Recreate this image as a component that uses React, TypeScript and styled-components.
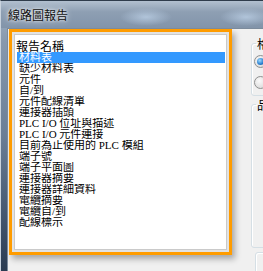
import styled, { createGlobalStyle } from "styled-components";

const GlobalStyle = createGlobalStyle`
  html, body {
    margin: 0;
    padding: 0;
    overflow: hidden;
  }
  body {
    width: 263px;
    height: 271px;
    background: #f0f0f0;
  }
`;

const reportNames: string[] = [
  "材料表",
  "缺少材料表",
  "元件",
  "自/到",
  "元件配線清單",
  "連接器插頭",
  "PLC I/O 位址與描述",
  "PLC I/O 元件連接",
  "目前為止使用的 PLC 模組",
  "端子號",
  "端子平面圖",
  "連接器摘要",
  "連接器詳細資料",
  "電纜摘要",
  "電纜自/到",
  "配線標示",
];

const App: React.FC = () => {
  const selected = 0;

  return (
    <>
      <GlobalStyle />
      <Window>
        <TitleBar>線路圖報告</TitleBar>
        <Body>
          <Client>
            <Highlight>
              <ListBox>
                <ListHeader>報告名稱</ListHeader>
                {reportNames.map((name, i) => (
                  <ListRow key={name} $selected={i === selected}>
                    <RowText>{name}</RowText>
                  </ListRow>
                ))}
              </ListBox>
            </Highlight>

            <SidePanel>
              <GroupBox>
                <Legend>格式</Legend>
                <Radio $checked />
                <Radio />
              </GroupBox>
              <GroupBox $tall>
                <Legend>品項</Legend>
              </GroupBox>
              <LowerBox />
            </SidePanel>
          </Client>
        </Body>
      </Window>
    </>
  );
};

const Window = styled.div`
  width: 263px;
  height: 271px;
  box-sizing: border-box;
  display: flex;
  flex-direction: column;
  overflow: hidden;
  border-top: 1px solid #2f3c4b;
  border-left: 1px solid #c9d3de;
  background: linear-gradient(
    to bottom,
    #a3b3c5 0%,
    #8799ae 15%,
    #6a7e96 50%,
    #43566e 80%,
    #2a3b51 100%
  );
`;

const TitleBar = styled.div`
  height: 27px;
  display: flex;
  align-items: center;
  padding-left: 7px;
  flex-shrink: 0;
  font-family: "Noto Sans CJK TC", sans-serif;
  font-size: 12px;
  color: #111;
  text-shadow: 0 0 6px rgba(255, 255, 255, 0.9), 0 0 3px rgba(255, 255, 255, 0.9);
  background:
    radial-gradient(ellipse 26px 9px at 145px 16px, rgba(190, 210, 232, 0.75), transparent),
    radial-gradient(ellipse 26px 9px at 245px 16px, rgba(190, 210, 232, 0.75), transparent),
    linear-gradient(to bottom, #b2c0cf 0%, #8e9fb3 40%, #8294aa 100%);
`;

const Body = styled.div`
  flex: 1;
  display: flex;
  padding-left: 6px;
  min-height: 0;
`;

const Client = styled.div`
  flex: 1;
  display: flex;
  align-items: flex-start;
  gap: 19px;
  padding-left: 1px;
  background: #f0f0f0;
  border-top: 1px solid #7c8b9c;
  border-left: 1px solid #7c8b9c;
  overflow: hidden;
`;

const Highlight = styled.div`
  width: 223px;
  height: 226px;
  box-sizing: border-box;
  flex-shrink: 0;
  border: 3px solid #ff9c00;
  padding: 2px;
  background: #e3e3e3;
  box-shadow: 3px 4px 6px rgba(0, 0, 0, 0.3);
`;

const ListBox = styled.div`
  height: 100%;
  box-sizing: border-box;
  background: #fff;
  border: 1px solid #cacaca;
  padding: 4px 1px 0 1px;
  font-family: "Liberation Serif", "Noto Sans CJK TC", serif;
  color: #000;
`;

const ListHeader = styled.div`
  height: 13px;
  line-height: 13px;
  font-family: "Noto Sans CJK TC", sans-serif;
  font-size: 12px;
`;

const ListRow = styled.div<{ $selected?: boolean }>`
  height: 11px;
  margin: 0 0 0 1px;
  padding-left: 2px;
  display: flex;
  align-items: center;
  overflow: hidden;
  background: ${({ $selected }) => ($selected ? "#3399ff" : "transparent")};
  color: ${({ $selected }) => ($selected ? "#fff" : "#000")};
`;

const RowText = styled.span`
  font-size: 11px;
  line-height: 11px;
  white-space: nowrap;
`;

const SidePanel = styled.div`
  width: 60px;
  flex-shrink: 0;
  display: flex;
  flex-direction: column;
  padding-top: 8px;
`;

const GroupBox = styled.fieldset<{ $tall?: boolean }>`
  margin: 0;
  padding: 0 0 6px 3px;
  height: ${({ $tall }) => ($tall ? "150px" : "auto")};
  box-sizing: border-box;
  border: 1px solid #d5dfe5;
  border-radius: 3px;
  box-shadow: inset 1px 1px 0 #fff;
  display: flex;
  flex-direction: column;
  gap: 8px;

  & + & {
    margin-top: 2px;
  }
`;

const Legend = styled.legend`
  padding: 0 1px;
  margin-left: 1px;
  font-family: "Noto Sans CJK TC", sans-serif;
  font-size: 12px;
  line-height: 13px;
  color: #000;
`;

const Radio = styled.span<{ $checked?: boolean }>`
  position: relative;
  width: 13px;
  height: 13px;
  box-sizing: border-box;
  margin: 0 0 0 -1px;
  border: 1px solid #8e8f8f;
  border-radius: 50%;
  background: radial-gradient(circle at 40% 35%, #fafafa, #d4d4d4);

  &:first-of-type {
    margin-top: 5px;
  }

  &::after {
    content: "";
    display: ${({ $checked }) => ($checked ? "block" : "none")};
    position: absolute;
    left: 2px;
    top: 2px;
    width: 7px;
    height: 7px;
    border-radius: 50%;
    background: radial-gradient(circle at 40% 35%, #9fdcff, #2a7fd0 60%, #14508e);
  }
`;

const LowerBox = styled.div`
  margin: 4px 0 0 4px;
  height: 30px;
  border: 1px solid #d5dfe5;
  border-radius: 3px;
  box-shadow: inset 1px 1px 0 #fff;
`;

export default App;
